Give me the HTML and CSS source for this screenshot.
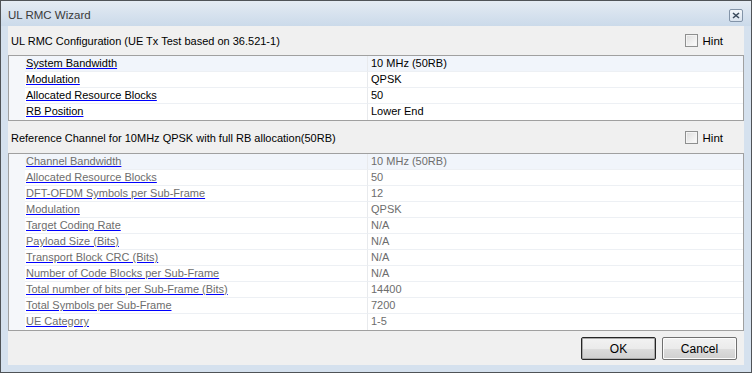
FILE: index.html
```html
<!DOCTYPE html>
<html lang="en">
<head>
  <meta charset="UTF-8" />
  <title>UL RMC Wizard</title>
  <link rel="stylesheet" href="styles.css">
</head>
<body>
  <div class="window">
    <div class="titlebar">
      <span class="title">UL RMC Wizard</span>
      <span class="close-btn">
        <svg width="8" height="7" viewBox="0 0 8 7"><path d="M1 1 L7 6 M7 1 L1 6" stroke="#3a4a5c" stroke-width="1.6" fill="none"/></svg>
      </span>
    </div>

    <div class="client">
      <div class="section-head first">
        <span class="section-title">UL RMC Configuration (UE Tx Test based on 36.521-1)</span>
        <label class="hint"><span class="check"></span>Hint</label>
      </div>
      <div class="grid">
        <div class="row selected"><span class="gutter"></span><span class="name">System Bandwidth</span><span class="value">10 MHz (50RB)</span></div>
        <div class="row"><span class="gutter"></span><span class="name">Modulation</span><span class="value">QPSK</span></div>
        <div class="row"><span class="gutter"></span><span class="name">Allocated Resource Blocks</span><span class="value">50</span></div>
        <div class="row"><span class="gutter"></span><span class="name">RB Position</span><span class="value">Lower End</span></div>
      </div>

      <div class="section-head second">
        <span class="section-title">Reference Channel for 10MHz QPSK with full RB allocation(50RB)</span>
        <label class="hint"><span class="check"></span>Hint</label>
      </div>
      <div class="grid readonly">
        <div class="row selected"><span class="gutter"></span><span class="name">Channel Bandwidth</span><span class="value">10 MHz (50RB)</span></div>
        <div class="row"><span class="gutter"></span><span class="name">Allocated Resource Blocks</span><span class="value">50</span></div>
        <div class="row"><span class="gutter"></span><span class="name">DFT-OFDM Symbols per Sub-Frame</span><span class="value">12</span></div>
        <div class="row"><span class="gutter"></span><span class="name">Modulation</span><span class="value">QPSK</span></div>
        <div class="row"><span class="gutter"></span><span class="name">Target Coding Rate</span><span class="value">N/A</span></div>
        <div class="row"><span class="gutter"></span><span class="name">Payload Size (Bits)</span><span class="value">N/A</span></div>
        <div class="row"><span class="gutter"></span><span class="name">Transport Block CRC (Bits)</span><span class="value">N/A</span></div>
        <div class="row"><span class="gutter"></span><span class="name">Number of Code Blocks per Sub-Frame</span><span class="value">N/A</span></div>
        <div class="row"><span class="gutter"></span><span class="name">Total number of bits per Sub-Frame (Bits)</span><span class="value">14400</span></div>
        <div class="row"><span class="gutter"></span><span class="name">Total Symbols per Sub-Frame</span><span class="value">7200</span></div>
        <div class="row"><span class="gutter"></span><span class="name">UE Category</span><span class="value">1-5</span></div>
      </div>

      <div class="footer">
        <button class="btn default">OK</button>
        <button class="btn">Cancel</button>
      </div>
    </div>
  </div>
</body>
</html>
```

FILE: styles.css
```css
* {
  box-sizing: border-box;
}

body {
  margin: 0;
  font-family: "Liberation Sans", Arial, sans-serif;
  font-size: 11px;
  color: #000;
  background: #fff;
}

.window {
  width: 752px;
  height: 373px;
  border: 1px solid #4f5357;
  background: #d5e1ee;
  display: flex;
  flex-direction: column;
}

.titlebar {
  height: 25px;
  flex: none;
  display: flex;
  align-items: center;
  justify-content: space-between;
  padding: 0 8px 0 7px;
  background: linear-gradient(#e4ebf3, #cbdaea);
}

.title {
  font-size: 11.5px;
  color: #3a3a3a;
  padding-top: 2px;
}

.close-btn {
  width: 14px;
  height: 13px;
  margin-top: 4px;
  border: 1px solid #8394a8;
  border-radius: 2px;
  background: linear-gradient(#f4f7fa, #d9e3ee);
  display: flex;
  align-items: center;
  justify-content: center;
}

.client {
  margin: 0 7px;
  height: 339px;
  background: #f0f0f0;
  display: flex;
  flex-direction: column;
}

.section-head {
  display: flex;
  align-items: center;
  justify-content: space-between;
  padding: 0 21px 0 3px;
}

.section-head.first {
  height: 29px;
}

.section-head.second {
  height: 32px;
  padding-top: 1px;
}

.section-title {
  font-size: 11px;
}

.hint {
  display: flex;
  align-items: center;
  gap: 5px;
  font-size: 11.5px;
}

.check {
  width: 13px;
  height: 13px;
  border: 1px solid #8e8f8f;
  background: linear-gradient(135deg, #dcdcdc, #fdfdfd);
  box-shadow: inset 0 0 0 1px #f4f4f4;
}

.grid {
  border: 1px solid #a0a0a0;
  background: #fff;
}

.row {
  display: grid;
  grid-template-columns: 16px 342px 1fr;
  height: 16px;
  line-height: 15px;
}

.gutter {
  background: #f5f7fa;
}

.name {
  padding-left: 1px;
  border-bottom: 1px solid #edf0f4;
  text-decoration: underline;
  text-decoration-color: #0000ff;
  text-underline-offset: 1px;
  white-space: nowrap;
}

.value {
  padding-left: 3px;
  border-left: 1px solid #e8eaed;
  border-bottom: 1px solid #edf0f4;
}

.row.selected .name,
.row.selected .value {
  background: #f1f5fb;
}

.row:last-child .name,
.row:last-child .value {
  border-bottom: none;
}

.readonly .name,
.readonly .value {
  color: #6d6d6d;
}

.footer {
  flex: 1;
  display: flex;
  justify-content: flex-end;
  gap: 6px;
  padding: 6px 7px 0 0;
}

.btn {
  width: 75px;
  height: 23px;
  font-family: "Liberation Sans", Arial, sans-serif;
  font-size: 12px;
  color: #000;
  border: 1px solid #707070;
  border-radius: 2px;
  background: linear-gradient(#f2f2f2 0%, #ebebeb 50%, #dddddd 51%, #cfcfcf 100%);
  box-shadow: inset 0 0 0 1px #fcfcfc;
}

.btn.default {
  border-color: #262626;
  box-shadow: inset 0 0 0 1px #a8a8a8;
}
```
